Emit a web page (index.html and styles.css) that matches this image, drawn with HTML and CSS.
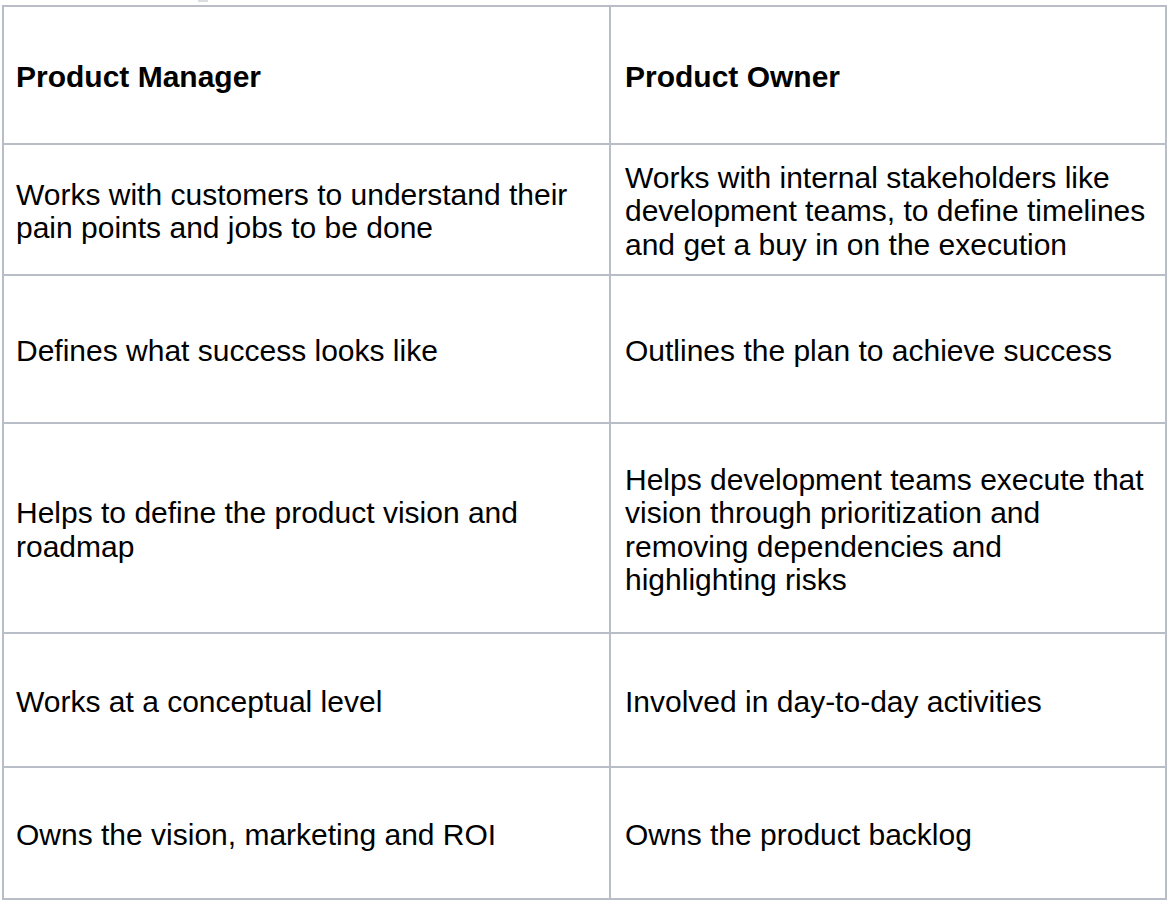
FILE: index.html
```html
<!DOCTYPE html>
<html lang="en">
<head>
<meta charset="utf-8">
<title>Product Manager vs Product Owner</title>
<link rel="stylesheet" href="styles.css">
</head>
<body>
<div class="page">
  <div class="cutoff"></div>
  <table class="compare">
    <tr class="r1">
      <th>Product Manager</th>
      <th>Product Owner</th>
    </tr>
    <tr class="r2">
      <td>Works with customers to understand their pain points and jobs to be done</td>
      <td>Works with internal stakeholders like development teams, to define timelines and get a buy in on the execution</td>
    </tr>
    <tr class="r3">
      <td>Defines what success looks like</td>
      <td>Outlines the plan to achieve success</td>
    </tr>
    <tr class="r4">
      <td>Helps to define the product vision and roadmap</td>
      <td>Helps development teams execute that vision through prioritization and removing dependencies and highlighting risks</td>
    </tr>
    <tr class="r5">
      <td>Works at a conceptual level</td>
      <td>Involved in day-to-day activities</td>
    </tr>
    <tr class="r6">
      <td>Owns the vision, marketing and ROI</td>
      <td>Owns the product backlog</td>
    </tr>
  </table>
</div>
</body>
</html>
```

FILE: styles.css
```css
html, body {
  margin: 0;
  padding: 0;
  background: #ffffff;
}

.page {
  padding: 0 0 0 2px;
  font-family: "Liberation Sans", Arial, Helvetica, sans-serif;
  color: #000000;
}

.cutoff {
  width: 10px;
  height: 2px;
  margin-left: 196px;
  margin-bottom: 3px;
  background: #d9dce1;
}

.compare {
  border-collapse: separate;
  border-spacing: 0;
  width: 1165px;
  table-layout: fixed;
  border-top: 2px solid #b8bdc7;
  border-left: 2px solid #b8bdc7;
  font-size: 30px;
  line-height: 33.5px;
}

.compare th,
.compare td {
  text-align: left;
  vertical-align: middle;
  border-right: 2px solid #b8bdc7;
  border-bottom: 2px solid #b8bdc7;
  padding: 3px 10px 0 12px;
}

.compare th {
  font-weight: bold;
}

.compare th:first-child,
.compare td:first-child {
  width: 607px;
  box-sizing: border-box;
}

.compare th:last-child,
.compare td:last-child {
  padding-left: 14px;
  padding-right: 4px;
}

.r1 { height: 138px; }
.r2 { height: 131px; }
.r3 { height: 148px; }
.r4 { height: 210px; }
.r5 { height: 134px; }
.r6 { height: 132px; }
```
